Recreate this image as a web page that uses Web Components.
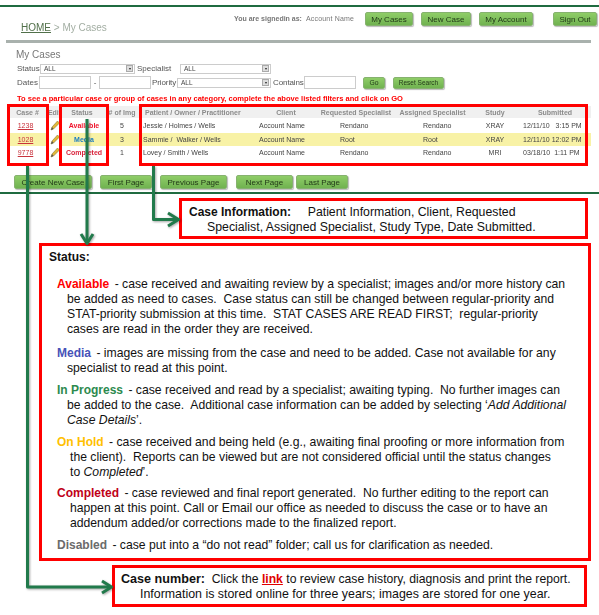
<!DOCTYPE html>
<html>
<head>
<meta charset="utf-8">
<title>My Cases help</title>
<style>
  html, body { margin: 0; background: #fff; }
  body { width: 599px; height: 615px; overflow: hidden; position: relative; font-family: "Liberation Sans", Arial, sans-serif; }
</style>
</head>
<body>
<case-screen></case-screen>
<note-box style="margin: 4px 0 0 179px; width: 409px; height: 41px;">
  <div style="padding: 4px 0 0 7px; white-space: nowrap; line-height: 14.500px; font-size: 12.300px;"><b style="font-size:12px;margin-right:3px">Case Information:</b>&nbsp;&nbsp;&nbsp; Patient Information, Client, Requested<br><span style="margin-left: 18px">Specialist, Assigned Specialist, Study Type, Date Submitted.</span></div>
</note-box>
<note-box style="margin: 4px 0 0 39px; width: 552px; height: 318px;">
  <div style="padding: 4px 0 0 7px; font-weight: bold; line-height: 15px;">Status:</div>
  <status-entry term="Available" color="#f00" gap="12">- case received and awaiting review by a specialist; images and/or more history can<br>be added as need to cases.&nbsp; Case status can still be changed between regular-priority and<br>STAT-priority submission at this time.&nbsp; STAT CASES ARE READ FIRST;&nbsp; regular-priority<br>cases are read in the order they are received.</status-entry>
  <status-entry term="Media" color="#4652b8" gap="9">- images are missing from the case and need to be added. Case not available for any<br>specialist to read at this point.</status-entry>
  <status-entry term="In Progress" color="#2c8a4e" gap="7">- case received and read by a specialist; awaiting typing.&nbsp; No further images can<br>be added to the case.&nbsp; Additional case information can be added by selecting ‘<i>Add Additional<br>Case Details</i>’.</status-entry>
  <status-entry term="On Hold" color="#ffc000" gap="7" indent="13">- case received and being held (e.g., awaiting final proofing or more information from<br>the client).&nbsp; Reports can be viewed but are not considered official until the status changes<br>to <i>Completed</i>’.</status-entry>
  <status-entry term="Completed" color="#c00018" gap="6" indent="13">- case reviewed and final report generated.&nbsp; No further editing to the report can<br>happen at this point. Call or Email our office as needed to discuss the case or to have an<br>addendum added/or corrections made to the finalized report.</status-entry>
  <status-entry term="Disabled" color="#6b6b6b" gap="7">- case put into a “do not read” folder; call us for clarification as needed.</status-entry>
</note-box>
<note-box style="margin: 4px 0 0 112px; width: 475px; height: 42px;">
  <div style="padding: 4px 0 0 6px; white-space: nowrap; line-height: 15px; font-size: 12.400px;"><b style="font-size:12.600px">Case number:</b><span style="font-size:12.200px">&nbsp; Click the <a href="#" style="color:#e00000;font-weight:bold">link</a> to review case history, diagnosis and print the report.</span><br><span style="margin-left: 19px">Information is stored online for three years; images are stored for one year.</span></div>
</note-box>
<flow-arrows></flow-arrows>

<script>
class GreenButton extends HTMLElement {
  connectedCallback() {
    this.attachShadow({ mode: 'open' });
    this.shadowRoot.innerHTML = `
      <style>
        :host {
          display: flex; align-items: center; justify-content: center;
          box-sizing: border-box; height: var(--h, 14px);
          background: linear-gradient(#8fcd68, #70b250);
          border: 1px solid #86b26f; border-radius: 2px;
          box-shadow: 1px 1px 1px #bbb;
          color: #1f3616; font-size: var(--fs, 8px); white-space: nowrap;
        }
      </style>
      <slot></slot>`;
  }
}

class CaseScreen extends HTMLElement {
  connectedCallback() {
    this.attachShadow({ mode: 'open' });
    this.shadowRoot.innerHTML = `
      <style>
        :host { display: block; height: 194px; box-sizing: border-box; padding-top: 5px; border-bottom: 2px solid #1f6b40; overflow: hidden; }
        .wrap { filter: blur(0.4px); }
        .top { height: 2px; background: #1f6b40; }
        .bar { display: flex; height: 33px; box-sizing: border-box; position: relative; }
        .crumb { padding: 15px 0 0 21px; width: 234px; box-sizing: border-box; font-size: 10px; color: #a3aea3; white-space: nowrap; }
        .crumb u { color: #51704a; }
        .who { padding-top: 8px; width: 131px; font-size: 7px; font-weight: bold; color: #777; white-space: nowrap; }
        .who span { font-weight: normal; margin-left: 2px; letter-spacing: .2px; }
        .nav { display: flex; padding-top: 5px; gap: 8px; }
        .rule { height: 3px; margin: 0 8px 0 6px; background: #a9b1ad; }
        h1 { margin: 6px 0 0 16px; font-size: 10px; line-height: 12px; font-weight: normal; color: #777; }
        .row { display: flex; align-items: center; padding-left: 17px; font-size: 8px; color: #555; height: 13px; white-space: nowrap; }
        .sel, .inp { box-sizing: border-box; display: flex; align-items: center; background: #fff; border: 1px solid #ccc; font-size: 6.5px; padding-left: 3px; color: #444; }
        .sel { height: 10px; justify-content: space-between; padding-right: 1px; }
        .sel i { width: 7px; height: 7px; background: #ddd; border: 1px solid #aaa; box-sizing: border-box; display: flex; align-items: center; justify-content: center; }
        .sel i::after { content: ""; border: 1.5px solid transparent; border-top: 2px solid #222; border-bottom: 0; }
        .inp { height: 13px; }
        .warn { margin: 5px 0 0 17px; font-size: 7.55px; line-height: 9px; font-weight: bold; color: #f00; white-space: nowrap; }
        .actions { display: flex; margin: 9px 0 0 14px; gap: 8px; }
      </style>
      <div class="top"></div>
      <div class="wrap">
        <div class="bar">
          <div class="crumb"><u>HOME</u> &gt; My Cases</div>
          <div class="who">You are signedin as: <span>Account Name</span></div>
          <div class="nav">
            <green-button style="width:48px">My Cases</green-button>
            <green-button style="width:50px">New Case</green-button>
            <green-button style="width:54px">My Account</green-button>
            <green-button style="width:44px;margin-left:12px">Sign Out</green-button>
          </div>
        </div>
        <div class="rule"></div>
        <h1>My Cases</h1>
        <div class="row" style="margin-top:1px">
          <span style="width:23px">Status</span>
          <span class="sel" style="width:95px">ALL<i></i></span>
          <span style="padding-left:2px;box-sizing:border-box;width:45px">Specialist</span>
          <span class="sel" style="width:91px">ALL<i></i></span>
        </div>
        <div class="row" style="margin-top:1px">
          <span style="width:22px">Dates</span>
          <span class="inp" style="width:52px"></span>
          <span style="width:8px;text-align:center">-</span>
          <span class="inp" style="width:52px"></span>
          <span style="width:26px;padding-left:1px;box-sizing:border-box;letter-spacing:-.1px">Priority</span>
          <span class="sel" style="width:94px">ALL<i></i></span>
          <span style="width:33px;padding-left:2px;box-sizing:border-box;letter-spacing:-.1px">Contains</span>
          <span class="inp" style="width:52px"></span>
          <green-button style="width:22px;margin-left:7px;--h:12px;--fs:6.8px">Go</green-button>
          <green-button style="width:51px;margin-left:8px;--h:12px;--fs:6.5px">Reset Search</green-button>
        </div>
        <div class="warn">To see a particular case or group of cases in any category, complete the above listed filters and click on GO</div>
        <case-table></case-table>
        <div class="actions">
          <green-button style="width:78px">Create New Case</green-button>
          <green-button style="width:52px">First Page</green-button>
          <green-button style="width:67px">Previous Page</green-button>
          <green-button style="width:57px;margin-left:1px">Next Page</green-button>
          <green-button style="width:52px;margin-left:-5px">Last Page</green-button>
        </div>
      </div>`;
  }
}

const CASE_COLS = '39px 15px 44px 32px 117px 62px 78px 75px 50px 70px';
const CASE_ROWS = [
  ['1238', 'Available', '#f0142c', 5, 'Jessie / Holmes / Wells', 'Rendano', 'Rendano', 'XRAY', '12/11/10&nbsp;&nbsp; 3:15 PM', false],
  ['1028', 'Media', '#1b7cc0', 3, 'Sammie /&nbsp; Walker / Wells', 'Root', 'Root', 'XRAY', '12/11/10 12:02 PM', true],
  ['9778', 'Completed', '#d9243c', 1, 'Lovey / Smith / Wells', 'Rendano', 'Rendano', 'MRI', '03/18/10&nbsp; 1:11 PM', false]
];

class CaseTable extends HTMLElement {
  connectedCallback() {
    this.attachShadow({ mode: 'open' });
    const pencil = `<svg width="10" height="11" viewBox="0 0 10 11"><path d="M1 10 L2 7 L7.5 1 L9.5 3 L3.5 9 Z" fill="#e2b93a" stroke="#8a7a3a" stroke-width=".6"/><path d="M1 10 L2 7 L3.5 9 Z" fill="#555"/></svg>`;
    const rows = CASE_ROWS.map(r => `
      <div class="tr${r[9] ? ' hi' : ''}">
        <span class="c link">${r[0]}</span>
        <span class="c edit">${pencil}</span>
        <span class="c st" style="color:${r[2]}">${r[1]}</span>
        <span class="c">${r[3]}</span>
        <span class="l" style="padding-left:5px">${r[4]}</span>
        <span class="l" style="padding-left:4px">Account Name</span>
        <span class="l" style="padding-left:23px">${r[5]}</span>
        <span class="l" style="padding-left:28px">${r[6]}</span>
        <span class="c">${r[7]}</span>
        <span class="l" style="padding-left:3px">${r[8]}</span>
      </div>`).join('');
    this.shadowRoot.innerHTML = `
      <style>
        :host { display: block; position: relative; margin: 3px 8px 0 7px; height: 60px; }
        .tr { display: grid; grid-template-columns: ${CASE_COLS}; align-items: center; height: 13.5px; padding-left: 1px; font-size: 7px; color: #444; white-space: nowrap; }
        .th { height: 12px; margin-top: 1px; margin-bottom: 1px; background: #f0f0f0; color: #8b8b8b; font-weight: bold; overflow: hidden; }
        .hi { background: #f8f2a6; }
        .c { text-align: center; }
        .l { text-align: left; }
        .edit { align-self: stretch; background: #fff; display: flex; align-items: center; }
        .th .edit { background: none; display: block; align-self: center; }
        .link { color: #c8323c; text-decoration: underline; padding-right: 4px; }
        .st { font-weight: bold; }
        svg { display: block; margin: 0 auto; }
        .mark { position: absolute; top: -2px; height: 62px; box-sizing: border-box; border: 3px solid #f00; }
      </style>
      <div class="tr th">
        <span class="c">Case #</span><span class="c edit">Edit</span><span class="c" style="padding-right:4px">Status</span><span class="c"># of Img</span>
        <span class="l" style="padding-left:7px">Patient / Owner / Practitioner</span><span class="c">Client</span><span class="c">Requested Specialist</span><span class="c">Assigned Specialist</span><span class="c">Study</span><span class="c">Submitted</span>
      </div>
      ${rows}
      <div class="mark" style="left:0;width:42px"></div>
      <div class="mark" style="left:52px;width:50px"></div>
      <div class="mark" style="left:132px;width:449px"></div>`;
  }
}

class NoteBox extends HTMLElement {
  connectedCallback() {
    this.attachShadow({ mode: 'open' });
    this.shadowRoot.innerHTML = `
      <style>
        :host { display: block; box-sizing: border-box; border: 3px solid #f00; background: #fff; font-size: 12px; color: #111; }
      </style>
      <slot></slot>`;
  }
}

class StatusEntry extends HTMLElement {
  connectedCallback() {
    this.attachShadow({ mode: 'open' });
    const gap = this.getAttribute('gap') || 8;
    const indent = this.getAttribute('indent') || 10;
    this.shadowRoot.innerHTML = `
      <style>
        :host { display: block; margin-top: ${gap}px; padding-left: ${15 + +indent}px; text-indent: -${indent}px; font-size: 12.2px; line-height: 15px; white-space: nowrap; }
        b { color: ${this.getAttribute('color')}; font-size: 12px; margin-right: 2px; }
      </style>
      <b>${this.getAttribute('term')}</b> <slot></slot>`;
  }
}

class FlowArrows extends HTMLElement {
  connectedCallback() {
    this.attachShadow({ mode: 'open' });
    this.shadowRoot.innerHTML = `
      <style>
        :host { position: absolute; left: 0; top: 0; width: 599px; height: 615px; pointer-events: none; }
        svg { display: block; filter: drop-shadow(1px 1px 1px rgba(0,0,0,.35)); }
        path { fill: none; stroke: #217a4b; stroke-width: 3; stroke-linejoin: round; }
      </style>
      <svg width="599" height="615" viewBox="0 0 599 615">
        <path d="M27.5 166 V587 H111"/>
        <path d="M102 581 L111.500 587 L102 593"/>
        <path d="M87 119 V243"/>
        <path d="M81 234 L87 243.500 L93 234"/>
        <path d="M153.500 166 V219.500 H178"/>
        <path d="M168 213 L178.500 219.500 L168 226"/>
      </svg>`;
  }
}

customElements.define('green-button', GreenButton);
customElements.define('case-table', CaseTable);
customElements.define('case-screen', CaseScreen);
customElements.define('note-box', NoteBox);
customElements.define('status-entry', StatusEntry);
customElements.define('flow-arrows', FlowArrows);
</script>
</body>
</html>
